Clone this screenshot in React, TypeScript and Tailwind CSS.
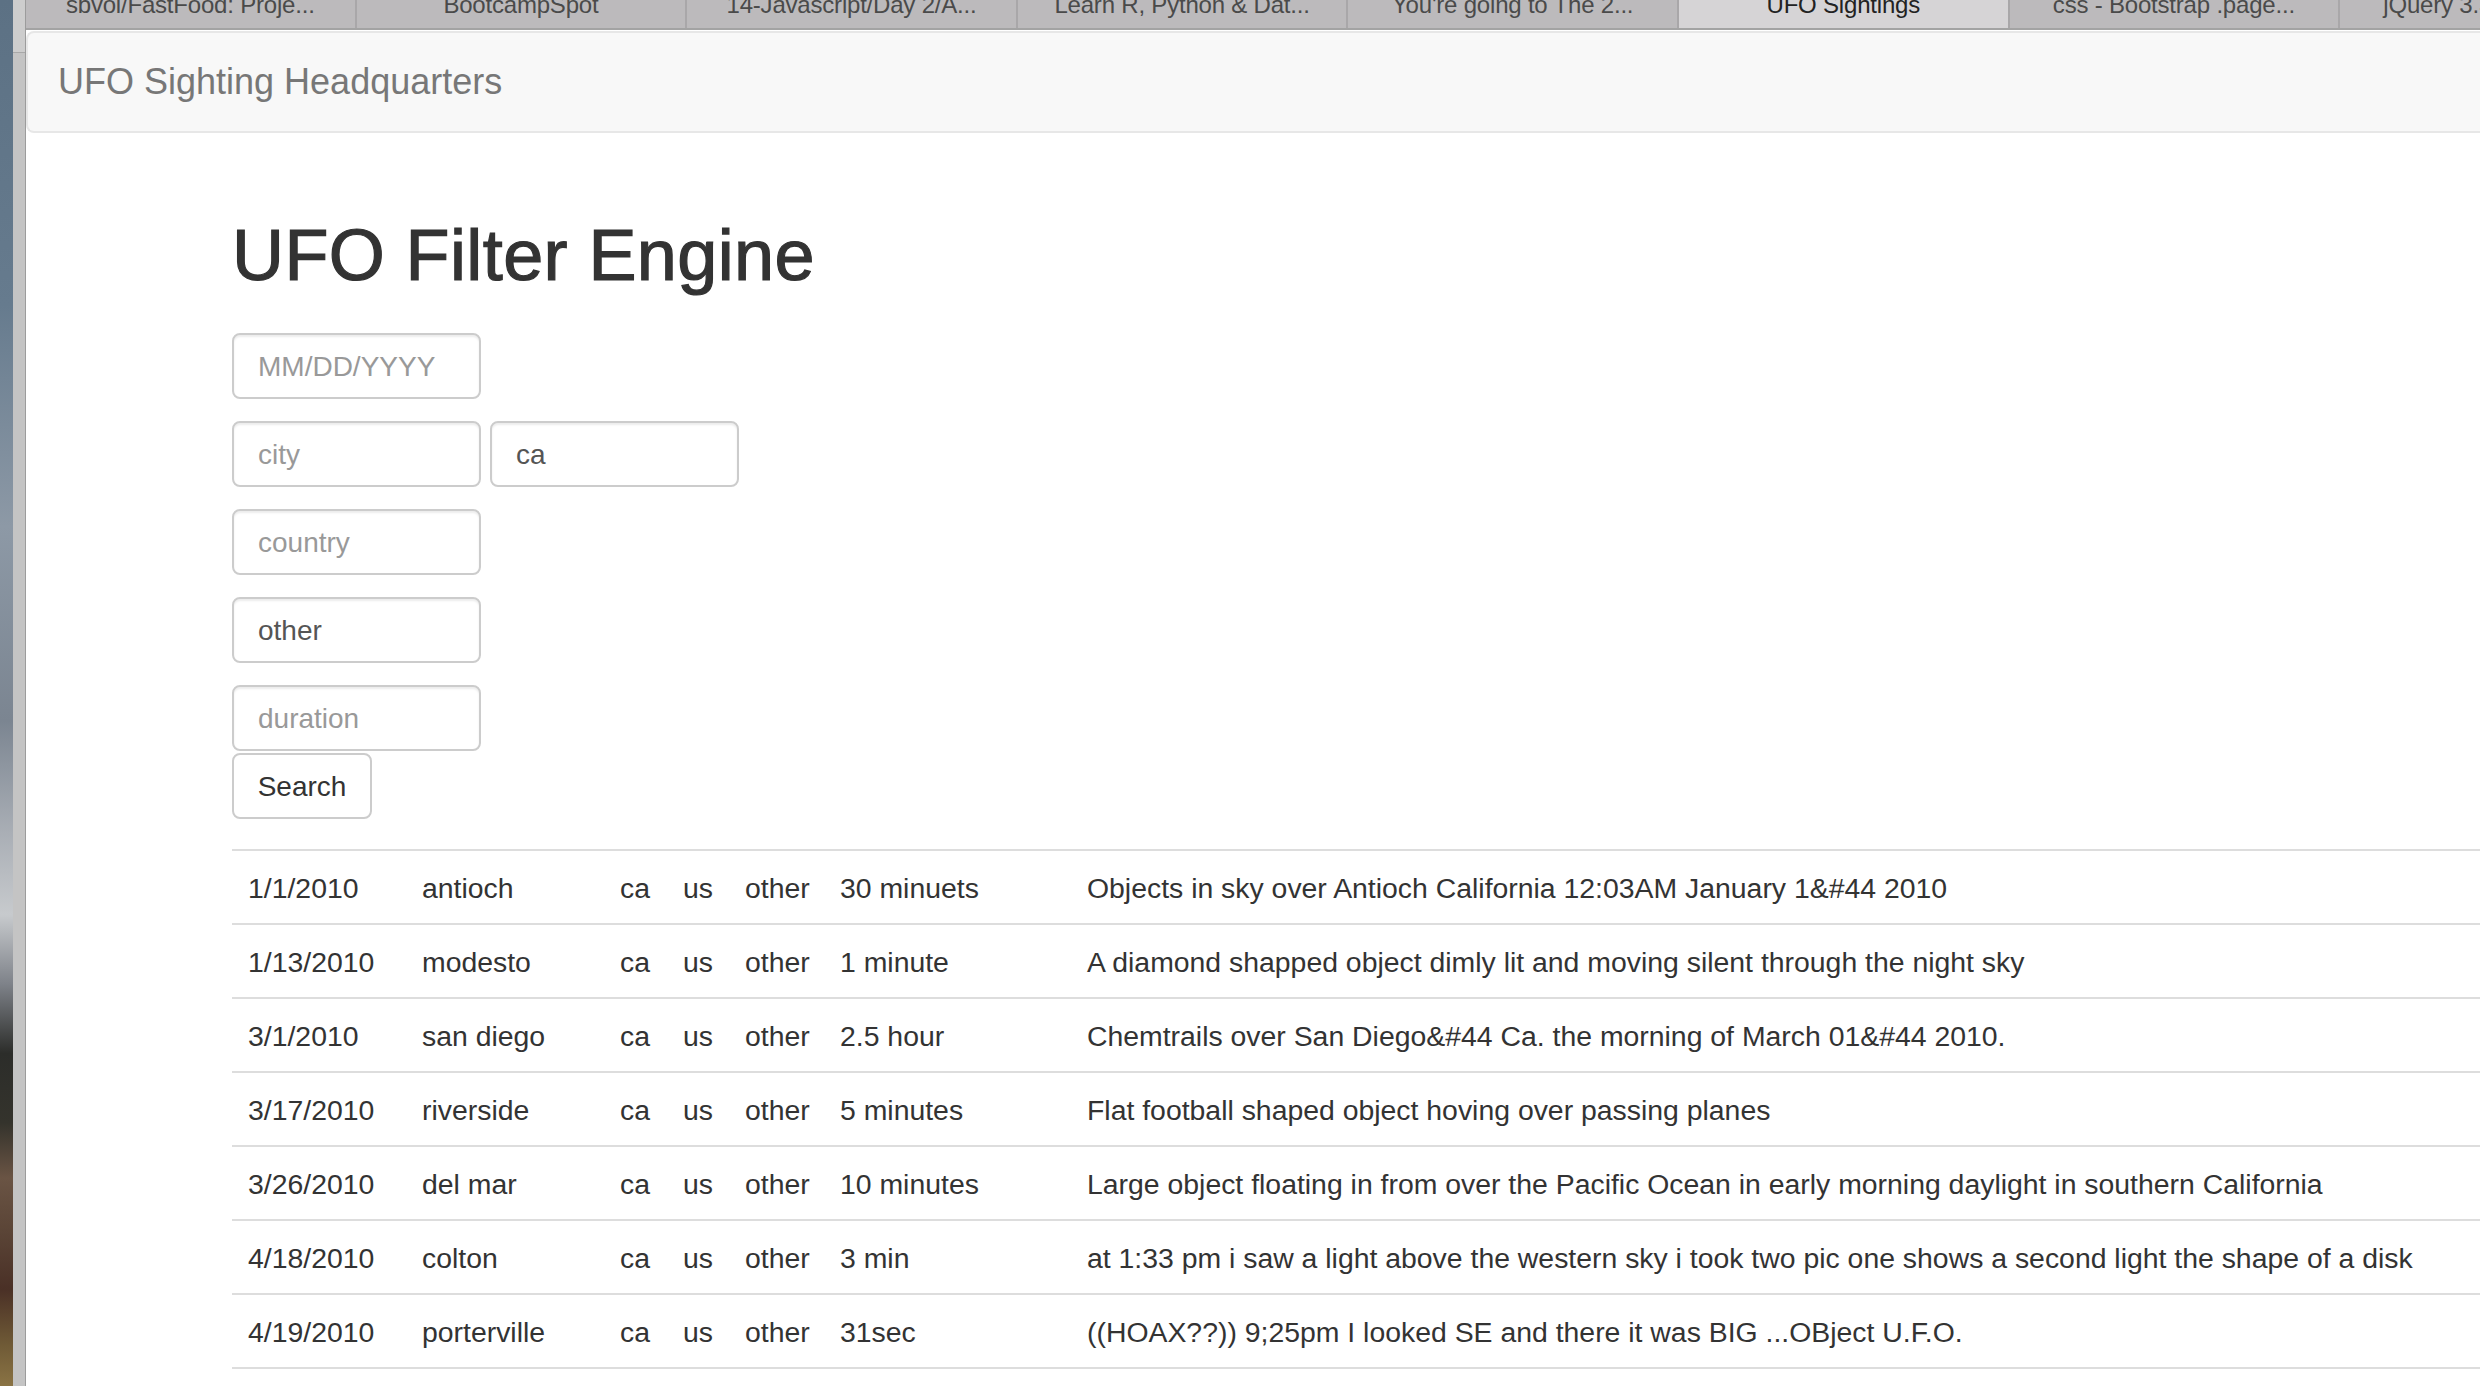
import React from "react";

const tabs = [
  { label: "sbvol/FastFood: Proje...", active: false },
  { label: "BootcampSpot", active: false },
  { label: "14-Javascript/Day 2/A...", active: false },
  { label: "Learn R, Python & Dat...", active: false },
  { label: "You're going to The 2...", active: false },
  { label: "UFO Sightings", active: true },
  { label: "css - Bootstrap .page...", active: false },
  { label: "jQuery 3.3.1 | Utilities...", active: false },
];

const rows = [
  ["1/1/2010", "antioch", "ca", "us", "other", "30 minuets", "Objects in sky over Antioch California 12:03AM January 1&#44 2010"],
  ["1/13/2010", "modesto", "ca", "us", "other", "1 minute", "A diamond shapped object dimly lit and moving silent through the night sky"],
  ["3/1/2010", "san diego", "ca", "us", "other", "2.5 hour", "Chemtrails over San Diego&#44 Ca. the morning of March 01&#44 2010."],
  ["3/17/2010", "riverside", "ca", "us", "other", "5 minutes", "Flat football shaped object hoving over passing planes"],
  ["3/26/2010", "del mar", "ca", "us", "other", "10 minutes", "Large object floating in from over the Pacific Ocean in early morning daylight in southern California"],
  ["4/18/2010", "colton", "ca", "us", "other", "3 min", "at 1:33 pm i saw a light above the western sky i took two pic one shows a second light the shape of a disk"],
  ["4/19/2010", "porterville", "ca", "us", "other", "31sec", "((HOAX??)) 9;25pm I looked SE and there it was BIG ...OBject U.F.O."],
  ["5/1/2010", "la mesa", "ca", "us", "other", "2 minutes", "Bright light hovering above the hills"],
];

const inputCls =
  "w-[249px] h-[66px] border-2 border-[#cccccc] rounded-[8px] px-[24px] pt-[2px] text-[28px] text-[#555555] bg-white outline-none placeholder:text-[#999999] shadow-[inset_0_2px_2px_rgba(0,0,0,0.075)]";

export default function App() {
  return (
    <div className="w-[2480px] h-[1386px] overflow-hidden flex bg-white font-['Liberation_Sans',Arial,sans-serif]">
      {/* desktop wallpaper sliver */}
      <div className="w-[13px] shrink-0 h-full bg-[linear-gradient(to_bottom,#5c7184_0%,#667b8e_22%,#8d99a6_38%,#7b8591_52%,#a9aeb5_60%,#c7cacd_66%,#7e8289_71%,#2c2d2a_76%,#34332c_81%,#6a5444_85%,#5a4436_89%,#4a3026_93%,#6f5a36_97%,#8a7344_100%)]" />
      {/* grey side band */}
      <div className="w-[13px] shrink-0 h-full flex flex-col bg-[#c4c4c4] border-r border-[#9c9c9c]">
        <div className="h-[53px] bg-[#cdcdcd] border-b border-[#a8a8a8]" />
      </div>

      <div className="flex-1 min-w-0 flex flex-col">
        {/* tab bar */}
        <div className="h-[28px] shrink-0 flex overflow-hidden bg-[#bcbabc]">
          {tabs.map((t) => (
            <div
              key={t.label}
              className={
                t.active
                  ? "w-[330.6px] shrink-0 h-full flex items-end justify-center pb-[11px] border-r-2 border-[#a9a7a9] bg-[#d6d4d6] text-[#222222] text-[24px] leading-[24px] tracking-[-0.2px] whitespace-nowrap overflow-hidden"
                  : "w-[330.6px] shrink-0 h-full flex items-end justify-center pb-[11px] border-r-2 border-[#a9a7a9] bg-[#bcbabc] text-[#4a4a4a] text-[24px] leading-[24px] tracking-[-0.2px] whitespace-nowrap overflow-hidden"
              }
            >
              <span>{t.label}</span>
            </div>
          ))}
        </div>
        <div className="h-[2px] shrink-0 bg-[#a3a3a3]" />

        {/* navbar */}
        <div className="mt-[1px] h-[102px] shrink-0 flex items-center pl-[30px] bg-[#f8f8f8] border-2 border-r-0 border-[#e7e7e7] rounded-l-[8px]">
          <span className="text-[36px] leading-[40px] text-[#777777]">UFO Sighting Headquarters</span>
        </div>

        {/* main content */}
        <div className="pl-[206px]">
          <h1 className="mt-[83px] text-[72px] leading-[79px] tracking-[0.4px] text-[#333333] font-medium [-webkit-text-stroke:1.2px_#333333]">
            UFO Filter Engine
          </h1>

          <div className="mt-[38px] flex flex-col">
            <div className="flex">
              <input className={inputCls} placeholder="MM/DD/YYYY" />
            </div>
            <div className="mt-[22px] flex gap-[9px]">
              <input className={inputCls} placeholder="city" />
              <input className={inputCls} defaultValue="ca" />
            </div>
            <div className="mt-[22px] flex">
              <input className={inputCls} placeholder="country" />
            </div>
            <div className="mt-[22px] flex">
              <input className={inputCls} defaultValue="other" />
            </div>
            <div className="mt-[22px] flex">
              <input className={inputCls} placeholder="duration" />
            </div>
            <div className="mt-[2px] flex">
              <button className="w-[140px] h-[66px] pt-[2px] border-2 border-[#cccccc] rounded-[8px] bg-white text-[28px] text-[#333333]">
                Search
              </button>
            </div>
          </div>

          <table className="mt-[30px] w-[2260px] table-fixed border-collapse text-[28.4px] leading-[40px] text-[#333333]">
            <colgroup>
              <col className="w-[174px]" />
              <col className="w-[198px]" />
              <col className="w-[63px]" />
              <col className="w-[62px]" />
              <col className="w-[95px]" />
              <col className="w-[247px]" />
              <col />
            </colgroup>
            <tbody>
              {rows.map((r, i) => (
                <tr key={i}>
                  {r.map((c, j) => (
                    <td key={j} className="border-t-2 border-[#dddddd] px-[16px] pt-[17px] pb-[15px] whitespace-nowrap text-left align-top">
                      {c}
                    </td>
                  ))}
                </tr>
              ))}
            </tbody>
          </table>
        </div>
      </div>
    </div>
  );
}
